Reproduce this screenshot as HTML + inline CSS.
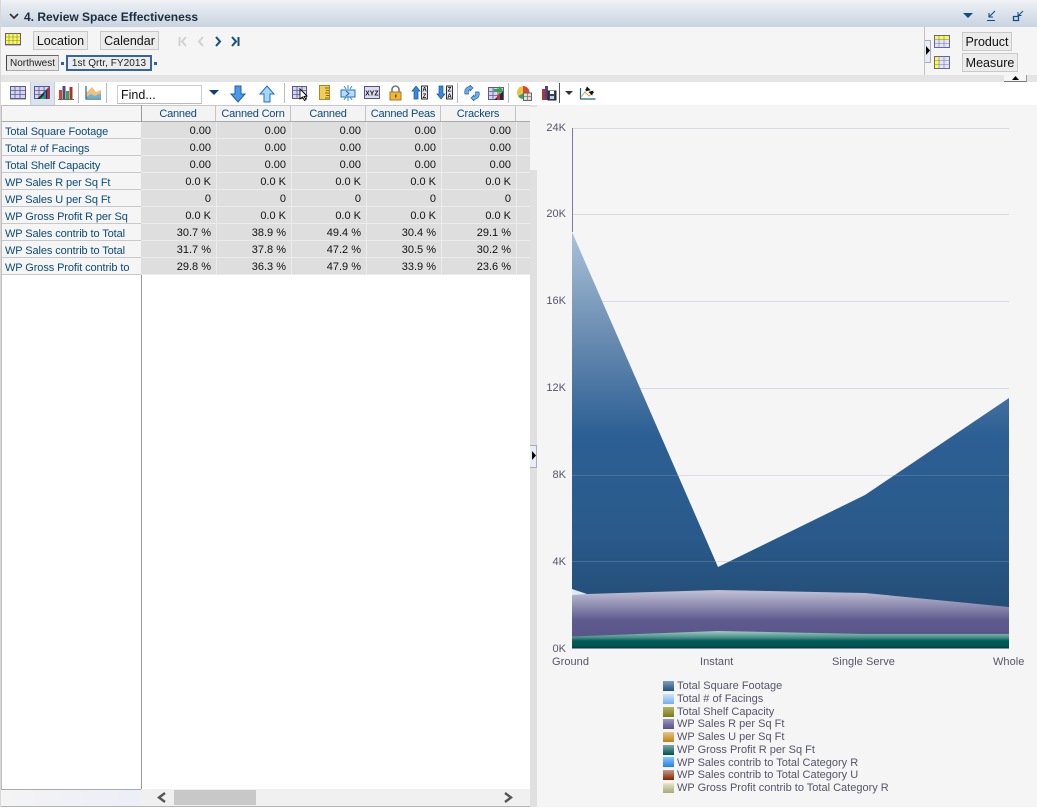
<!DOCTYPE html>
<html><head><meta charset="utf-8"><title>Review Space Effectiveness</title>
<style>
html,body{margin:0;padding:0;background:#fff}
#p{position:relative;width:1037px;height:810px;overflow:hidden;background:#fff;font-family:"Liberation Sans",Arial,sans-serif;font-size:11px;color:#111}
#p div,#p span,#p svg{position:absolute;white-space:nowrap}
.btn{background:#ececec;border:1px solid #c9c9c9;font-size:12.5px;height:17px;line-height:19px;text-align:center;color:#111}
.l{left:2px;width:139px;height:16px;border-bottom:1px solid #c8c8c8;background:#f5f5f5;color:#0b4a7a;line-height:20px;letter-spacing:-.1px}
.l b{font-weight:normal;margin-left:3px}
.row{left:141px;width:389px;height:16px;background:#dedede;border-bottom:1px solid #ececec}
.c{width:70px;text-align:right;top:0;line-height:19px;color:#111}
.h{top:106px;width:74px;height:15px;text-align:center;line-height:17px;color:#0b4a7a;background:#f3f3f3;border-right:1px solid #c4c4c4;letter-spacing:-.2px}
.v{left:538px;width:28px;text-align:right;color:#55556a;line-height:12px}
.x{top:656px;color:#55556a;line-height:13px;letter-spacing:.05px}
.lg{left:677px;color:#55556a;line-height:12px}
.sw{left:663px;width:11px;height:10px}
.sep{top:83px;width:1px;height:20px;background:#bbb}
</style></head><body>
<div id="p">
<!-- header -->
<div style="left:0;top:0;width:1037px;height:27px;background:linear-gradient(#f1f3f6 0,#e6ebf1 20%,#c9d4e0 100%)"></div>
<div style="left:0;top:0;width:1px;height:807px;background:#d8d8d8"></div>
<svg style="left:9px;top:13px" width="10" height="7"><path d="M1 1l4 4 4-4" fill="none" stroke="#333" stroke-width="1.7"/></svg>
<div style="left:24px;top:10px;font-size:12px;font-weight:bold;line-height:15px;color:#1c2c3c">4. Review Space Effectiveness</div>
<svg style="left:963px;top:12px" width="10" height="7"><path d="M0 1h10L5 6z" fill="#0f4d8a"/></svg>
<svg style="left:986px;top:10px" width="12" height="12"><path d="M9 1L3.500 6.500M3 3v4h4M1 10.500h8" fill="none" stroke="#0f4d8a" stroke-width="1.100"/></svg>
<svg style="left:1012px;top:10px" width="13" height="12"><path d="M1.500 6.500h5v4h-5z" fill="none" stroke="#0f4d8a" stroke-width="1.300"/><path d="M11 1L6.500 5.500M6 2v3.500h3.500" fill="none" stroke="#0f4d8a"/></svg>
<!-- panel -->
<div style="left:1px;top:27px;width:1036px;height:48px;background:#f5f5f5"></div>
<div style="left:1px;top:75px;width:1036px;height:7px;background:#e4e4e4"></div>
<svg style="left:5px;top:33px" width="16" height="13"><rect x=".5" y=".5" width="15" height="11" fill="#ffff30" stroke="#5c5a96"/><path d="M0 4h16M0 7.500h16M4 0v12M8 0v12M12 0v12" stroke="#7674b8" stroke-width=".6"/><rect y="12" width="16" height="1" fill="#bbb"/></svg>
<div class="btn" style="left:33px;top:31px;width:53px">Location</div>
<div class="btn" style="left:100px;top:31px;width:57px">Calendar</div>
<svg style="left:177px;top:36px" width="64" height="11"><path d="M2.500 1v9M9 1L5 5.500 9 10" fill="none" stroke="#d2d2d2" stroke-width="2"/><path d="M26 1l-4 4.500 4 4.500" fill="none" stroke="#d2d2d2" stroke-width="2"/><path d="M39 1l4 4.500-4 4.500" fill="none" stroke="#114e82" stroke-width="2"/><path d="M55 1l4 4.500-4 4.500M61.500 1v9" fill="none" stroke="#114e82" stroke-width="2"/></svg>
<div style="left:6px;top:55px;width:51px;height:14px;background:#e6e6e6;border:1px solid #aaa;border-left-color:#444;border-top-color:#666;font-size:10px;line-height:15px;text-align:center;color:#222">Northwest</div>
<div style="left:61px;top:62px;width:3px;height:3px;background:#2f6299"></div>
<div style="left:66px;top:55px;width:82px;height:12px;border:2px solid #34659c;background:#ececec;font-size:10px;line-height:13px;text-align:center;color:#222;letter-spacing:.05px">1st Qrtr, FY2013</div>
<div style="left:154px;top:62px;width:3px;height:3px;background:#2f6299"></div>
<div style="left:924px;top:27px;width:1px;height:48px;background:#c4c4c4"></div>
<div style="left:925px;top:40px;width:5px;height:21px;background:#e8edf5;border:1px solid #aab;border-left:0"></div>
<svg style="left:926px;top:46px" width="5" height="9"><path d="M0 0l4 4.500L0 9z" fill="#000"/></svg>
<svg style="left:934px;top:35px" width="16" height="14"><rect x=".5" y=".5" width="15" height="12" fill="#e4e4f4" stroke="#66649c"/><rect x="1" y="1" width="14" height="3.500" fill="#ffff30"/><path d="M0 4.500h16M0 8.500h16M5 0v13M10 0v13" stroke="#7674b8" stroke-width=".6"/></svg>
<svg style="left:934px;top:56px" width="16" height="14"><rect x=".5" y=".5" width="15" height="12" fill="#e4e4f4" stroke="#66649c"/><rect x="1" y="1" width="4" height="11" fill="#ffff30"/><path d="M0 4.500h16M0 8.500h16M5 0v13M10 0v13" stroke="#7674b8" stroke-width=".6"/></svg>
<div class="btn" style="left:962px;top:32px;width:48px">Product</div>
<div class="btn" style="left:962px;top:53px;width:54px">Measure</div>
<div style="left:1004px;top:75px;width:22px;height:6px;background:#f5f5f5;border-bottom:1px solid #777;border-right:1px solid #999"></div>
<svg style="left:1012px;top:76px" width="7" height="5"><path d="M0 4l3.500-4 3.500 4z" fill="#000"/></svg>
<!-- toolbar -->
<div style="left:1px;top:82px;width:1036px;height:23px;background:#fff"></div>
<div style="left:30px;top:82px;width:23px;height:23px;background:#d9e4ee;border-left:1px solid #ccc;border-right:1px solid #ccc"></div>
<svg style="left:10px;top:86px" width="16" height="14"><rect x=".5" y=".5" width="15" height="12" fill="#d4d4ee" stroke="#5c5a96"/><path d="M0 4.500h16M0 8.500h16M5 0v13M10 0v13" stroke="#5c5a96" stroke-width=".8"/><rect y="13" width="16" height="1" fill="#bbb"/></svg>
<svg style="left:34px;top:86px" width="16" height="14"><rect x=".5" y=".5" width="15" height="12" fill="#d4d4ee" stroke="#5c5a96"/><path d="M0 4.500h16M0 8.500h16M5 0v13M10 0v13" stroke="#5c5a96" stroke-width=".8"/><path d="M3 13L15 1v12z" fill="#2a2a2a"/><path d="M6 13l4-4v4z" fill="#2fa84a"/><path d="M10 13V7l2-2v8z" fill="#2a7ad0"/><path d="M13 13V3l2-2v12z" fill="#b33030"/></svg>
<svg style="left:58px;top:85px" width="16" height="15"><rect x="1" y="5" width="3" height="9" fill="#c84a30"/><rect x="4.500" y="1" width="3" height="13" fill="#4a4a80"/><rect x="8" y="6" width="3" height="8" fill="#30a850"/><rect x="11.500" y="2" width="3" height="12" fill="#b03030"/><rect y="14" width="16" height="1" fill="#666"/></svg>
<div class="sep" style="left:78px"></div>
<svg style="left:85px;top:85px" width="17" height="16"><path d="M1 12V8l6-6 4 5 5-2v7z" fill="#f2c078"/><path d="M1 12l5-3 4 2 6-3v5H1z" fill="#6fb2d8"/><path d="M1 1v13h15" fill="none" stroke="#1a6a8a" stroke-width="1.200"/></svg>
<div class="sep" style="left:106px"></div>
<div style="left:117px;top:85px;width:83px;height:17px;border:1px solid #ccc;background:#fff;font-size:12.5px;line-height:19px;text-indent:3px;color:#111;border-bottom-color:#bbb">Find...</div>
<svg style="left:209px;top:90px" width="10" height="6"><path d="M0 0h10L5 5z" fill="#0f3f76"/></svg>
<svg style="left:230px;top:85px" width="16" height="18"><path d="M5 1h6v8h4l-7 8-7-8h4z" fill="#4a98ea" stroke="#1f5fae"/></svg>
<svg style="left:259px;top:85px" width="16" height="18"><path d="M5 17h6V9h4L8 1 1 9h4z" fill="#a8d4f8" stroke="#1f70ba"/></svg>
<div class="sep" style="left:284px"></div>
<svg style="left:292px;top:86px" width="16" height="15"><rect x=".5" y=".5" width="14" height="12" fill="#d4d4ee" stroke="#5c5a96"/><path d="M0 4.500h15M0 8.500h15M5 0v13M10 0v13" stroke="#5c5a96" stroke-width=".8"/><path d="M8 3v10l2.500-2 2 3.500 1.500-1-2-3 3-.5z" fill="#fff" stroke="#000" stroke-width=".9"/></svg>
<svg style="left:319px;top:85px" width="11" height="16"><rect x=".5" y=".5" width="10" height="14" fill="#f2cc58" stroke="#b08a1c"/><path d="M6 3h4M7 5.500h3M6 8h4M7 10.500h3M6 13h4" stroke="#8a6a10"/></svg>
<svg style="left:340px;top:85px" width="16" height="16"><rect x="1" y="5" width="14" height="7" fill="#bcdcf6" stroke="#1f70ba"/><path d="M8 0v4M4 1l2 3M12 1l-2 3M8 12v4M4 15l2-3M12 15l-2-3" stroke="#3a8ad8"/><path d="M6 6l3 2.500L6 11" fill="none" stroke="#1f5fae"/></svg>
<svg style="left:364px;top:86px" width="16" height="14"><rect x=".5" y=".5" width="15" height="12" fill="#dcdcf0" stroke="#55538f"/><text x="8" y="9.500" font-family="Liberation Mono" font-size="7.500" font-weight="bold" text-anchor="middle" fill="#222">XYZ</text></svg>
<svg style="left:389px;top:85px" width="13" height="16"><path d="M3 7V4.500a3.500 3.500 0 0 1 7 0V7" fill="none" stroke="#777" stroke-width="1.600"/><rect x="1" y="7" width="11" height="8" fill="#f2b43a" stroke="#a87a18"/><rect x="6" y="9.500" width="1.500" height="3" fill="#6a4a08"/></svg>
<svg style="left:411px;top:85px" width="18" height="16"><path d="M5 1l4 5H7v8H3V6H1z" fill="#3a86d8" stroke="#1a5aa0" stroke-width=".7"/><rect x="10.500" y="1" width="6" height="13" fill="#e8e8f0" stroke="#333"/><text x="13.500" y="6.500" font-size="6" font-weight="bold" text-anchor="middle" fill="#111">A</text><text x="13.500" y="13" font-size="6" font-weight="bold" text-anchor="middle" fill="#111">Z</text></svg>
<svg style="left:436px;top:85px" width="18" height="16"><path d="M5 14l4-5H7V1H3v8H1z" fill="#3a86d8" stroke="#1a5aa0" stroke-width=".7"/><rect x="10.500" y="1" width="6" height="13" fill="#e8e8f0" stroke="#333"/><text x="13.500" y="6.500" font-size="6" font-weight="bold" text-anchor="middle" fill="#111">Z</text><text x="13.500" y="13" font-size="6" font-weight="bold" text-anchor="middle" fill="#111">A</text></svg>
<div class="sep" style="left:457px"></div>
<svg style="left:464px;top:85px" width="16" height="16"><path d="M1 9C0 5 2 2 6 1.500V0l3 3-3 3V4.500C4 5 4 7 4.500 9z" fill="#6ab0f0" stroke="#1f5fae" stroke-width=".7"/><path d="M15 7c1 4-1 7-5 7.500V16l-3-3 3-3v1.500c2-.5 2-2.500 1.500-4.500z" fill="#6ab0f0" stroke="#1f5fae" stroke-width=".7"/></svg>
<svg style="left:488px;top:85px" width="16" height="16"><rect x=".5" y="2.500" width="15" height="12" fill="#d4d4ee" stroke="#5c5a96"/><path d="M0 6.500h16M0 10.500h16M5 2v13M10 2v13" stroke="#5c5a96" stroke-width=".8"/><path d="M6 15l9-9v9z" fill="#2b2b2b"/><path d="M9 15v-4l3-3v7z" fill="#c83030"/><path d="M5 4h6V1l4 4-4 4V7H7z" fill="#2fa84a"/></svg>
<div class="sep" style="left:508px"></div>
<svg style="left:516px;top:85px" width="16" height="16"><path d="M7 1a6.500 6.500 0 0 1 6.500 6.500H7z" fill="#d84a30"/><path d="M7 1A6.500 6.500 0 0 0 2 11l5-3.500z" fill="#f2c23a"/><path d="M2 11a6.500 6.500 0 0 0 6 3V7.500z" fill="#3aa84a"/><rect x="7.500" y="8" width="8" height="7.500" fill="#ddd" stroke="#666"/><path d="M7.500 11.700h8M11.500 8v7" stroke="#666" stroke-width=".7"/></svg>
<svg style="left:541px;top:85px" width="16" height="16"><rect x="1" y="4" width="3" height="11" fill="#b83030"/><rect x="4" y="1" width="3" height="14" fill="#4a4a80"/><rect x="7" y="6" width="8" height="9" fill="#345" stroke="#223"/><rect x="9" y="6" width="4" height="3" fill="#fff"/><rect x="9" y="11" width="4" height="3" fill="#c8c8e8"/></svg>
<div style="left:559px;top:83px;width:1px;height:20px;background:#555"></div>
<svg style="left:565px;top:91px" width="8" height="5"><path d="M0 0h8L4 4z" fill="#333"/></svg>
<svg style="left:579px;top:85px" width="17" height="16"><path d="M1.500 3v11h15" fill="none" stroke="#1a6a8a" stroke-width="1.200"/><path d="M2 12l4-5 4 4 5-4" fill="none" stroke="#e8a040"/><path d="M7 6l1-4 3 3zM6 4.500l3-1.500" fill="#111" stroke="#111" stroke-width=".6"/><path d="M14 6l-1 4-3-3zM15 7.500l-3 1.500" fill="#111" stroke="#111" stroke-width=".6"/></svg>
<!-- table -->
<div style="left:530px;top:105px;width:507px;height:702px;background:#f5f5f5"></div>
<div style="left:530px;top:170px;width:7px;height:637px;background:#e0e0e0"></div>
<div style="left:530px;top:105px;width:7px;height:2px;background:#e0e0e0"></div>
<div style="left:1px;top:105px;width:1px;height:684px;background:#c0c0c0"></div>
<div style="left:2px;top:105px;width:139px;height:17px;background:#f5f5f5;border-top:1px solid #bbb;box-sizing:border-box"></div>
<div style="left:141px;top:105px;width:389px;height:17px;background:#f3f3f3;border-top:1px solid #c8c8c8;border-bottom:1px solid #aaa;box-sizing:border-box"></div>
<div style="left:2px;top:121px;width:139px;height:1px;background:#aaa"></div>
<div class="h" style="left:141px">Canned</div>
<div class="h" style="left:216px">Canned Corn</div>
<div class="h" style="left:291px">Canned</div>
<div class="h" style="left:366px">Canned Peas</div>
<div class="h" style="left:441px">Crackers</div>

<div class="l" style="top:122px"><b>Total Square Footage</b></div>
<div class="l" style="top:139px"><b>Total # of Facings</b></div>
<div class="l" style="top:156px"><b>Total Shelf Capacity</b></div>
<div class="l" style="top:173px"><b>WP Sales R per Sq Ft</b></div>
<div class="l" style="top:190px"><b>WP Sales U per Sq Ft</b></div>
<div class="l" style="top:207px"><b>WP Gross Profit R per Sq</b></div>
<div class="l" style="top:224px"><b>WP Sales contrib to Total</b></div>
<div class="l" style="top:241px"><b>WP Sales contrib to Total</b></div>
<div class="l" style="top:258px"><b>WP Gross Profit contrib to</b></div>
<div style="left:2px;top:275px;width:139px;height:514px;background:#fff"></div>
<div style="left:141px;top:105px;width:1px;height:684px;background:#9a9a96"></div>
<div style="left:1px;top:789px;width:140px;height:1px;background:#aaa"></div>

<div class="row" style="top:122px"><span class="c" style="left:0">0.00</span><span class="c" style="left:75px">0.00</span><span class="c" style="left:150px">0.00</span><span class="c" style="left:225px">0.00</span><span class="c" style="left:300px">0.00</span></div>
<div class="row" style="top:139px"><span class="c" style="left:0">0.00</span><span class="c" style="left:75px">0.00</span><span class="c" style="left:150px">0.00</span><span class="c" style="left:225px">0.00</span><span class="c" style="left:300px">0.00</span></div>
<div class="row" style="top:156px"><span class="c" style="left:0">0.00</span><span class="c" style="left:75px">0.00</span><span class="c" style="left:150px">0.00</span><span class="c" style="left:225px">0.00</span><span class="c" style="left:300px">0.00</span></div>
<div class="row" style="top:173px"><span class="c" style="left:0">0.0 K</span><span class="c" style="left:75px">0.0 K</span><span class="c" style="left:150px">0.0 K</span><span class="c" style="left:225px">0.0 K</span><span class="c" style="left:300px">0.0 K</span></div>
<div class="row" style="top:190px"><span class="c" style="left:0">0</span><span class="c" style="left:75px">0</span><span class="c" style="left:150px">0</span><span class="c" style="left:225px">0</span><span class="c" style="left:300px">0</span></div>
<div class="row" style="top:207px"><span class="c" style="left:0">0.0 K</span><span class="c" style="left:75px">0.0 K</span><span class="c" style="left:150px">0.0 K</span><span class="c" style="left:225px">0.0 K</span><span class="c" style="left:300px">0.0 K</span></div>
<div class="row" style="top:224px"><span class="c" style="left:0">30.7 %</span><span class="c" style="left:75px">38.9 %</span><span class="c" style="left:150px">49.4 %</span><span class="c" style="left:225px">30.4 %</span><span class="c" style="left:300px">29.1 %</span></div>
<div class="row" style="top:241px"><span class="c" style="left:0">31.7 %</span><span class="c" style="left:75px">37.8 %</span><span class="c" style="left:150px">47.2 %</span><span class="c" style="left:225px">30.5 %</span><span class="c" style="left:300px">30.2 %</span></div>
<div class="row" style="top:258px"><span class="c" style="left:0">29.8 %</span><span class="c" style="left:75px">36.3 %</span><span class="c" style="left:150px">47.9 %</span><span class="c" style="left:225px">33.9 %</span><span class="c" style="left:300px">23.6 %</span></div>
<div style="left:216px;top:122px;width:1px;height:153px;background:#ececec"></div>
<div style="left:291px;top:122px;width:1px;height:153px;background:#ececec"></div>
<div style="left:366px;top:122px;width:1px;height:153px;background:#ececec"></div>
<div style="left:441px;top:122px;width:1px;height:153px;background:#ececec"></div>
<div style="left:516px;top:122px;width:1px;height:153px;background:#ececec"></div>
<!-- scrollbar -->
<div style="left:1px;top:790px;width:140px;height:16px;background:linear-gradient(90deg,#f4f4f4,#eceef8)"></div>
<div style="left:141px;top:789px;width:389px;height:17px;background:#f0f0f0"></div>
<div style="left:1px;top:806px;width:529px;height:1px;background:#b4b4b4"></div>
<div style="left:174px;top:790px;width:82px;height:15px;background:#c8c8c8"></div>
<svg style="left:156px;top:792px" width="11" height="11"><path d="M9 1L3 5.500 9 10" fill="none" stroke="#555" stroke-width="2.400"/></svg>
<svg style="left:503px;top:792px" width="11" height="11"><path d="M2 1l6 4.500L2 10" fill="none" stroke="#555" stroke-width="2.400"/></svg>
<!-- splitter -->
<div style="left:530px;top:445px;width:6px;height:21px;background:#e8edf5;border:1px solid #aab;border-left:0"></div>
<svg style="left:532px;top:451px" width="5" height="9"><path d="M0 0l4 4.500L0 9z" fill="#000"/></svg>
<!-- chart -->
<svg style="left:0;top:0" width="1037" height="810">
<defs>
<linearGradient id="gb" gradientUnits="userSpaceOnUse" x1="0" y1="232" x2="0" y2="610"><stop offset="0" stop-color="#a9c2d9"/><stop offset=".26" stop-color="#6d8fb3"/><stop offset=".54" stop-color="#2c5f94"/><stop offset=".8" stop-color="#2a5a8b"/><stop offset="1" stop-color="#234d76"/></linearGradient>
<linearGradient id="gp" gradientUnits="userSpaceOnUse" x1="0" y1="592" x2="0" y2="637"><stop offset="0" stop-color="#bcbbd0"/><stop offset=".62" stop-color="#5f5b8f"/><stop offset="1" stop-color="#595588"/></linearGradient>
<linearGradient id="gt" gradientUnits="userSpaceOnUse" x1="0" y1="631" x2="0" y2="648"><stop offset="0" stop-color="#a2ccc4"/><stop offset=".38" stop-color="#4a8f88"/><stop offset=".58" stop-color="#005c58"/><stop offset=".88" stop-color="#005450"/><stop offset="1" stop-color="#003c40"/></linearGradient>
</defs>
<path d="M572 128.500H1009M572 214.500H1009M572 301.500H1009M572 388.500H1009M572 475.500H1009M572 561.500H1009" stroke="#d8d8e2" fill="none"/>
<path d="M572 232L718 567 865 495 1009 398V610H572z" fill="url(#gb)"/>
<path d="M572 589L587 594V600H572z" fill="#dcebfa"/>
<path d="M572 475.500H1009M572 561.500H1009" stroke="#fff" stroke-opacity=".14" fill="none"/>
<path d="M572 595L587 594 718 590 865 593 1009 607V640H572z" fill="url(#gp)"/>
<path d="M572 636.500L718 631 865 634 1009 634V648H572z" fill="url(#gt)"/>
<path d="M572.500 128V232" stroke="#7d7aa8" fill="none"/>
<path d="M572 648.500H1009" stroke="#8d8ab0" fill="none"/>
</svg>
<div class="v" style="top:122px">24K</div>
<div class="v" style="top:208px">20K</div>
<div class="v" style="top:295px">16K</div>
<div class="v" style="top:382px">12K</div>
<div class="v" style="top:469px">8K</div>
<div class="v" style="top:556px">4K</div>
<div class="v" style="top:643px">0K</div>
<div class="x" style="left:552px">Ground</div>
<div class="x" style="left:700px">Instant</div>
<div class="x" style="left:832px">Single Serve</div>
<div class="x" style="left:993px">Whole</div>
<div class="sw" style="top:681px;background:linear-gradient(#7f9dbd,#234f7f)"></div><div class="lg" style="top:680px">Total Square Footage</div>
<div class="sw" style="top:694px;background:linear-gradient(#cfe3fa,#6fb0ee)"></div><div class="lg" style="top:693px">Total # of Facings</div>
<div class="sw" style="top:707px;background:linear-gradient(#b4b46a,#7a7a14)"></div><div class="lg" style="top:706px">Total Shelf Capacity</div>
<div class="sw" style="top:719px;background:linear-gradient(#9a98bc,#55518a)"></div><div class="lg" style="top:718px">WP Sales R per Sq Ft</div>
<div class="sw" style="top:732px;background:linear-gradient(#e6c488,#bb8414)"></div><div class="lg" style="top:731px">WP Sales U per Sq Ft</div>
<div class="sw" style="top:745px;background:linear-gradient(#7fa8a8,#00504e)"></div><div class="lg" style="top:744px">WP Gross Profit R per Sq Ft</div>
<div class="sw" style="top:757px;background:linear-gradient(#8cc4fa,#1f80ee)"></div><div class="lg" style="top:757px">WP Sales contrib to Total Category R</div>
<div class="sw" style="top:770px;background:linear-gradient(#c89a84,#842400)"></div><div class="lg" style="top:769px">WP Sales contrib to Total Category U</div>
<div class="sw" style="top:783px;background:linear-gradient(#e6e6cc,#a8a878)"></div><div class="lg" style="top:782px">WP Gross Profit contrib to Total Category R</div>
</div>
</body></html>
